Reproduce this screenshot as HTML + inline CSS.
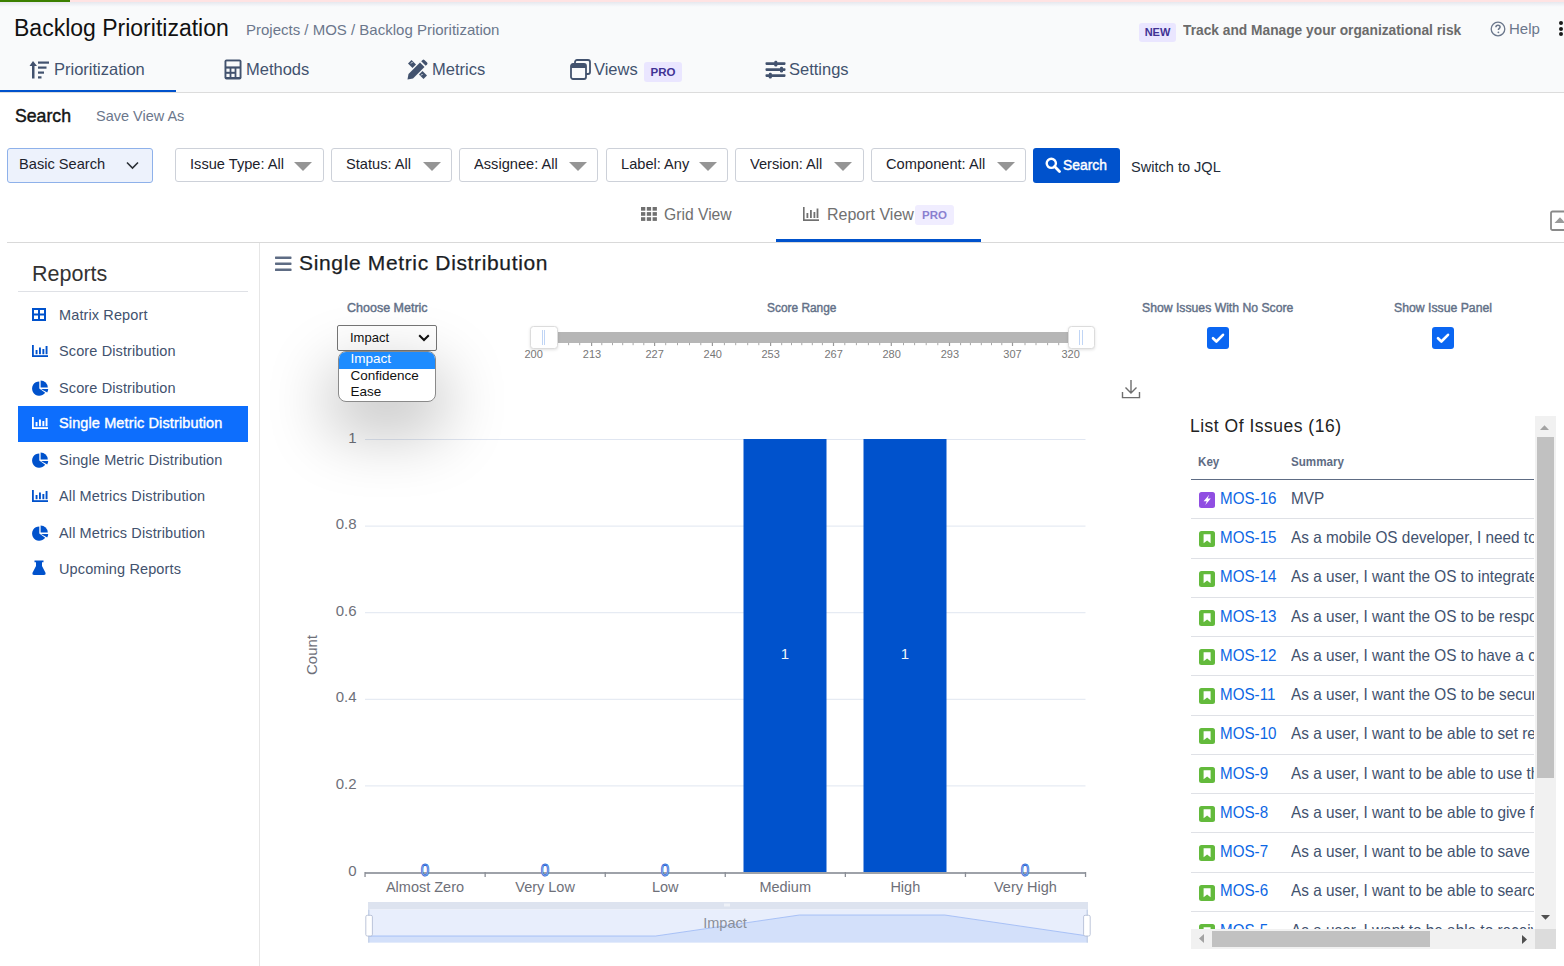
<!DOCTYPE html>
<html><head><meta charset="utf-8">
<style>
*{box-sizing:border-box;margin:0;padding:0}
html,body{width:1564px;height:966px;overflow:hidden;background:#fff;font-family:"Liberation Sans",sans-serif;color:#172b4d}
.abs{position:absolute}
#topbar{position:absolute;left:0;top:0;width:1564px;height:3px;background:#ffe3e3}
#topbar .g{position:absolute;left:0;top:0;width:70px;height:2px;background:#3b7f00}
#hdr{position:absolute;left:0;top:3px;width:1564px;height:90px;background:#f9fafb;border-bottom:1px solid #dcdcdc}
#hdrshadow{position:absolute;left:0;top:2px;width:1564px;height:5px;background:linear-gradient(#e6e8ee,#f9fafc)}
.title{position:absolute;left:14px;top:14.5px;font-size:23px;color:#111;white-space:nowrap}
.crumb{position:absolute;left:246px;top:21px;font-size:15px;color:#6b778c;white-space:nowrap}
.tab{position:absolute;top:59px;font-size:16.5px;color:#42526e;white-space:nowrap;display:flex;align-items:center}
.tab svg{margin-right:5px}
.pro{display:inline-block;background:#eae6ff;color:#403294;font-weight:bold;font-size:11.5px;padding:3px 6px;border-radius:3px}
.txt{position:absolute;white-space:nowrap}
.fbox{position:absolute;top:148px;height:34px;border:1px solid #cdd1d9;border-radius:3px;background:#fff;font-size:15px;color:#1c222c;white-space:nowrap}
.fbox span{position:absolute;top:5.8px;transform:scaleX(0.975);transform-origin:0 0}
.tri{position:absolute;top:13px;width:0;height:0;border-left:9px solid transparent;border-right:9px solid transparent;border-top:9px solid #959595}
</style></head>
<body>
<div id="topbar"><div class="g"></div></div>
<div id="hdr"></div>
<div id="hdrshadow"></div>
<div class="title">Backlog Prioritization</div>
<div class="crumb">Projects / MOS / Backlog Prioritization</div>


<div class="txt" style="left:1139px;top:23px;width:37px;height:19px;background:#eae6ff;border-radius:3px;color:#403294;font-weight:bold;font-size:11px;text-align:center;line-height:19px">NEW</div>
<div class="txt" style="left:1183px;top:20.5px;font-size:15px;font-weight:bold;color:#6b6b6b;transform:scaleX(0.917);transform-origin:0 0">Track and Manage your organizational risk</div>
<svg class="abs" style="left:1490px;top:21px" width="16" height="16" viewBox="0 0 16 16"><circle cx="8" cy="8" r="6.8" fill="none" stroke="#6b778c" stroke-width="1.3"/><path d="M5.9 6.3 C5.9 4.9 7 4.3 8 4.3 C9.1 4.3 10.1 5 10.1 6.1 C10.1 7.4 8.4 7.5 8.4 9" fill="none" stroke="#6b778c" stroke-width="1.5"/><circle cx="8.4" cy="11.3" r="0.9" fill="#6b778c"/></svg>
<div class="txt" style="left:1509px;top:20px;font-size:15px;color:#6b778c">Help</div>
<div class="abs" style="left:1559px;top:21px;width:4px;height:4px;border-radius:50%;background:#1a1a1a"></div>
<div class="abs" style="left:1559px;top:26.5px;width:4px;height:4px;border-radius:50%;background:#1a1a1a"></div>
<div class="abs" style="left:1559px;top:32px;width:4px;height:4px;border-radius:50%;background:#1a1a1a"></div>

<!-- tabs -->
<div class="abs" style="left:0;top:90px;width:176px;height:2px;background:#0052cc"></div>
<svg class="abs" style="left:29px;top:60px" width="21" height="19" viewBox="0 0 21 19"><path d="M4 1 L0.5 6 H3 V18.5 H5.5 V6 H8 Z" fill="#42526e"/><rect x="9" y="1.5" width="11" height="2.2" fill="#42526e"/><rect x="9" y="6.5" width="8.5" height="2.2" fill="#42526e"/><rect x="9" y="11.5" width="6" height="2.2" fill="#42526e"/><rect x="9" y="16.3" width="3.5" height="2.2" fill="#42526e"/></svg>
<div class="txt" style="left:54px;top:60px;font-size:16.5px;color:#42526e">Prioritization</div>
<svg class="abs" style="left:224px;top:59px" width="18" height="21" viewBox="0 0 18 21"><rect x="0.5" y="0.5" width="17" height="20" rx="2" fill="#42526e"/><rect x="2.4" y="2.4" width="13.2" height="5" fill="#f9fafb"/><rect x="2.4" y="9.6" width="3.2" height="3.2" fill="#f9fafb"/><rect x="7.4" y="9.6" width="3.2" height="3.2" fill="#f9fafb"/><rect x="2.4" y="14.8" width="3.2" height="3.2" fill="#f9fafb"/><rect x="7.4" y="14.8" width="3.2" height="3.2" fill="#f9fafb"/><rect x="12.4" y="9.6" width="3.2" height="8.4" fill="#f9fafb"/></svg>
<div class="txt" style="left:246px;top:60px;font-size:16.5px;color:#42526e">Methods</div>
<svg class="abs" style="left:407px;top:59px" width="21" height="21" viewBox="0 0 21 21"><path d="M0.5 20.5 L1.5 15 L13 3.5 L17.5 8 L6 19.5 Z" fill="#42526e"/><path d="M14.2 2.3 L15.6 0.9 Q16.5 0 17.4 0.9 L20.1 3.6 Q21 4.5 20.1 5.4 L18.7 6.8 Z" fill="#42526e"/><path d="M1 4.5 L4.5 1 L9 5.5 L5.5 9 Z" fill="#42526e"/><path d="M12 15.5 L15.5 12 L20 16.5 L16.5 20 Z" fill="#42526e"/><path d="M4 4.5 L5.5 3 M14 16.5 L15.5 15" stroke="#f9fafc" stroke-width="1"/></svg>
<div class="txt" style="left:432px;top:60px;font-size:16.5px;color:#42526e">Metrics</div>
<svg class="abs" style="left:570px;top:59px" width="21" height="21" viewBox="0 0 21 21"><rect x="5" y="1" width="15" height="14" rx="2" fill="none" stroke="#42526e" stroke-width="1.8"/><rect x="1" y="5" width="15" height="15" rx="2" fill="#f9fafc" stroke="#42526e" stroke-width="1.8"/><rect x="1" y="5" width="15" height="4" fill="#42526e"/></svg>
<div class="txt" style="left:594px;top:60px;font-size:16.5px;color:#42526e">Views</div>
<div class="txt" style="left:644px;top:62px;width:38px;height:20px;background:#eae6ff;border-radius:3px;color:#403294;font-weight:bold;font-size:11.5px;text-align:center;line-height:20px">PRO</div>
<svg class="abs" style="left:765px;top:60px" width="21" height="19" viewBox="0 0 21 19"><rect x="0.5" y="2.3" width="20" height="2.6" rx="0.8" fill="#42526e"/><rect x="0.5" y="8.3" width="20" height="2.6" rx="0.8" fill="#42526e"/><rect x="0.5" y="14.3" width="20" height="2.6" rx="0.8" fill="#42526e"/><rect x="9.3" y="0.8" width="3" height="5.6" rx="1.2" fill="#42526e"/><rect x="15" y="6.8" width="3" height="5.6" rx="1.2" fill="#42526e"/><rect x="3.8" y="12.8" width="3" height="5.6" rx="1.2" fill="#42526e"/></svg>
<div class="txt" style="left:789px;top:60px;font-size:16.5px;color:#42526e">Settings</div>

<!-- search row -->
<div class="txt" style="left:14.5px;top:104.5px;font-size:18.5px;color:#151515;-webkit-text-stroke:0.45px #151515;transform:scaleX(0.955);transform-origin:0 0">Search</div>
<div class="txt" style="left:96px;top:106.5px;font-size:15px;color:#6b778c;transform:scaleX(0.966);transform-origin:0 0">Save View As</div>

<div class="fbox" style="left:7px;width:146px;height:35px;background:#edf2fc;border-color:#8eb1ea"><span style="left:11px">Basic Search</span>
<svg class="abs" style="left:118px;top:12px" width="13" height="9" viewBox="0 0 13 9"><path d="M1 1.5 L6.5 7 L12 1.5" fill="none" stroke="#2a2f36" stroke-width="1.6"/></svg></div>
<div class="fbox" style="left:175px;width:149px"><span style="left:14px">Issue Type: All</span><div class="tri" style="left:118px"></div></div>
<div class="fbox" style="left:331px;width:121px"><span style="left:14px">Status: All</span><div class="tri" style="left:91px"></div></div>
<div class="fbox" style="left:459px;width:139px"><span style="left:14px">Assignee: All</span><div class="tri" style="left:109px"></div></div>
<div class="fbox" style="left:606px;width:122px"><span style="left:14px">Label: Any</span><div class="tri" style="left:92px"></div></div>
<div class="fbox" style="left:735px;width:129px"><span style="left:14px">Version: All</span><div class="tri" style="left:98px"></div></div>
<div class="fbox" style="left:871px;width:155px"><span style="left:14px">Component: All</span><div class="tri" style="left:125px"></div></div>
<div class="abs" style="left:1033px;top:148px;width:87px;height:35px;background:#0052cc;border-radius:3px"></div>
<svg class="abs" style="left:1045px;top:157px" width="16" height="16" viewBox="0 0 16 16"><circle cx="6.3" cy="6.3" r="4.6" fill="none" stroke="#fff" stroke-width="2.4"/><path d="M9.6 9.6 L14.5 14.5" stroke="#fff" stroke-width="2.8" stroke-linecap="round"/></svg>
<div class="txt" style="left:1063px;top:156px;font-size:15.5px;color:#fff;-webkit-text-stroke:0.45px #fff;transform:scaleX(0.895);transform-origin:0 0">Search</div>
<div class="txt" style="left:1131px;top:157.5px;font-size:15px;color:#222b38;transform:scaleX(0.97);transform-origin:0 0">Switch to JQL</div>

<!-- view tabs -->
<svg class="abs" style="left:641px;top:207px" width="16" height="14" viewBox="0 0 16 14"><g fill="#707070"><rect x="0" y="0" width="4.3" height="3.7"/><rect x="5.8" y="0" width="4.3" height="3.7"/><rect x="11.6" y="0" width="4.3" height="3.7"/><rect x="0" y="5.1" width="4.3" height="3.7"/><rect x="5.8" y="5.1" width="4.3" height="3.7"/><rect x="11.6" y="5.1" width="4.3" height="3.7"/><rect x="0" y="10.2" width="4.3" height="3.7"/><rect x="5.8" y="10.2" width="4.3" height="3.7"/><rect x="11.6" y="10.2" width="4.3" height="3.7"/></g></svg>
<div class="txt" style="left:664px;top:205px;font-size:16.5px;color:#707070;transform:scaleX(0.95);transform-origin:0 0">Grid View</div>
<svg class="abs" style="left:803px;top:207px" width="16" height="14" viewBox="0 0 16 14"><g fill="#707070"><rect x="0" y="0" width="1.6" height="14"/><rect x="0" y="12.3" width="16" height="1.7"/><rect x="3.5" y="6" width="1.8" height="5"/><rect x="7" y="3" width="1.8" height="8"/><rect x="10.5" y="5" width="1.8" height="6"/><rect x="13.6" y="1.5" width="1.8" height="9.5"/></g></svg>
<div class="txt" style="left:827px;top:205px;font-size:16.5px;color:#707070;transform:scaleX(0.97);transform-origin:0 0">Report View</div>
<div class="txt" style="left:915px;top:205px;width:39px;height:20px;background:#f0edff;border-radius:3px;color:#8a7fd0;font-weight:bold;font-size:11.5px;text-align:center;line-height:20px">PRO</div>
<div class="abs" style="left:7px;top:242px;width:1557px;height:1px;background:#d9d9d9"></div>
<div class="abs" style="left:776px;top:239px;width:205px;height:3px;background:#0052cc"></div>

<!-- sidebar -->
<div class="abs" style="left:259px;top:243px;width:1px;height:723px;background:#e6e6e6"></div>
<div class="txt" style="left:32px;top:262px;font-size:21.5px;color:#333">Reports</div>
<div class="abs" style="left:18px;top:291px;width:230px;height:1px;background:#dfe1e6"></div>
<div class="abs" style="left:18px;top:406px;width:230px;height:36px;background:#0d6efd"></div>
<svg class="abs" style="left:32px;top:308px" width="14" height="13" viewBox="0 0 14 13"><rect x="1" y="1" width="12" height="11" fill="none" stroke="#0052cc" stroke-width="2"/><rect x="6" y="1" width="2" height="11" fill="#0052cc"/><rect x="1" y="5.5" width="12" height="2" fill="#0052cc"/></svg>
<div class="txt" style="left:59px;top:307px;font-size:14.5px;color:#42526e;letter-spacing:0.12px;">Matrix Report</div>
<svg class="abs" style="left:32px;top:345px" width="16" height="12" viewBox="0 0 16 12"><g fill="#0052cc"><rect x="0" y="0" width="1.8" height="12"/><rect x="0" y="10.2" width="16" height="1.8"/><rect x="3.6" y="5" width="1.9" height="4.2"/><rect x="7" y="2.5" width="1.9" height="6.7"/><rect x="10.4" y="4" width="1.9" height="5.2"/><rect x="13.6" y="1" width="1.9" height="8.2"/></g></svg>
<div class="txt" style="left:59px;top:343px;font-size:14.5px;color:#42526e;letter-spacing:0.12px;">Score Distribution</div>
<svg class="abs" style="left:32px;top:379.5px" width="17" height="16" viewBox="0 0 17 16"><path d="M7.3 8.6 L7.3 1.4 A7.2 7.2 0 1 0 13.2 12.7 Z" fill="#0052cc"/><path d="M8.6 7.6 L8.6 0.4 A7.2 7.2 0 0 1 15.8 7.6 Z" fill="#0052cc"/><path d="M9 9 L16.2 9 A7.2 7.2 0 0 1 15.2 12.6 Z" fill="#0052cc"/></svg>
<div class="txt" style="left:59px;top:380px;font-size:14.5px;color:#42526e;letter-spacing:0.12px;">Score Distribution</div>
<svg class="abs" style="left:32px;top:417px" width="16" height="12" viewBox="0 0 16 12"><g fill="#fff"><rect x="0" y="0" width="1.8" height="12"/><rect x="0" y="10.2" width="16" height="1.8"/><rect x="3.6" y="5" width="1.9" height="4.2"/><rect x="7" y="2.5" width="1.9" height="6.7"/><rect x="10.4" y="4" width="1.9" height="5.2"/><rect x="13.6" y="1" width="1.9" height="8.2"/></g></svg>
<div class="txt" style="left:59px;top:415px;font-size:14.5px;color:#fff;letter-spacing:0.12px;-webkit-text-stroke:0.4px #fff">Single Metric Distribution</div>
<svg class="abs" style="left:32px;top:451.5px" width="17" height="16" viewBox="0 0 17 16"><path d="M7.3 8.6 L7.3 1.4 A7.2 7.2 0 1 0 13.2 12.7 Z" fill="#0052cc"/><path d="M8.6 7.6 L8.6 0.4 A7.2 7.2 0 0 1 15.8 7.6 Z" fill="#0052cc"/><path d="M9 9 L16.2 9 A7.2 7.2 0 0 1 15.2 12.6 Z" fill="#0052cc"/></svg>
<div class="txt" style="left:59px;top:452px;font-size:14.5px;color:#42526e;letter-spacing:0.12px;">Single Metric Distribution</div>
<svg class="abs" style="left:32px;top:490px" width="16" height="12" viewBox="0 0 16 12"><g fill="#0052cc"><rect x="0" y="0" width="1.8" height="12"/><rect x="0" y="10.2" width="16" height="1.8"/><rect x="3.6" y="5" width="1.9" height="4.2"/><rect x="7" y="2.5" width="1.9" height="6.7"/><rect x="10.4" y="4" width="1.9" height="5.2"/><rect x="13.6" y="1" width="1.9" height="8.2"/></g></svg>
<div class="txt" style="left:59px;top:488px;font-size:14.5px;color:#42526e;letter-spacing:0.12px;">All Metrics Distribution</div>
<svg class="abs" style="left:32px;top:524.5px" width="17" height="16" viewBox="0 0 17 16"><path d="M7.3 8.6 L7.3 1.4 A7.2 7.2 0 1 0 13.2 12.7 Z" fill="#0052cc"/><path d="M8.6 7.6 L8.6 0.4 A7.2 7.2 0 0 1 15.8 7.6 Z" fill="#0052cc"/><path d="M9 9 L16.2 9 A7.2 7.2 0 0 1 15.2 12.6 Z" fill="#0052cc"/></svg>
<div class="txt" style="left:59px;top:525px;font-size:14.5px;color:#42526e;letter-spacing:0.12px;">All Metrics Distribution</div>
<svg class="abs" style="left:32px;top:560px" width="14" height="15" viewBox="0 0 14 15"><path d="M2.5 0.5 H11.5 V2.3 H10 V6 L13.6 13 Q14 15 12 15 H2 Q0 15 0.4 13 L4 6 V2.3 H2.5 Z" fill="#0052cc"/></svg>
<div class="txt" style="left:59px;top:561px;font-size:14.5px;color:#42526e;letter-spacing:0.12px;">Upcoming Reports</div>

<!-- main header -->
<svg class="abs" style="left:275px;top:256px" width="17" height="16" viewBox="0 0 17 16"><g fill="#5e6c84"><rect x="0" y="0.5" width="16.5" height="2.4" rx="0.6"/><rect x="0" y="6.5" width="16.5" height="2.4" rx="0.6"/><rect x="0" y="12.6" width="16.5" height="2.4" rx="0.6"/></g></svg>
<div class="txt" style="left:299px;top:251px;font-size:21px;color:#1a1d24;letter-spacing:0.65px;-webkit-text-stroke:0.25px #1a1d24">Single Metric Distribution</div>

<!-- controls -->
<div class="txt" style="left:347px;top:301px;font-size:12.5px;color:#627087;-webkit-text-stroke:0.42px #627087;transform:scaleX(1);transform-origin:0 0">Choose Metric</div>
<div class="abs" style="left:337px;top:325px;width:100px;height:26px;border:1px solid #767676;border-radius:2px;background:#fff"></div>
<div class="txt" style="left:350px;top:330px;font-size:13px;color:#111">Impact</div>
<svg class="abs" style="left:418px;top:334px" width="12" height="8" viewBox="0 0 12 8"><path d="M1.2 1.2 L6 6 L10.8 1.2" fill="none" stroke="#111" stroke-width="2"/></svg>

<div class="txt" style="left:767px;top:301px;font-size:12.5px;color:#627087;-webkit-text-stroke:0.42px #627087;transform:scaleX(0.952);transform-origin:0 0">Score Range</div>
<div class="abs" style="left:550px;top:332px;width:520px;height:10.5px;background:#b6b6b6"></div>
<svg class="abs" style="left:540px;top:341px" width="545" height="6" viewBox="0 0 545 6"><rect x="28.1" y="1.8" width="1" height="2.4" fill="#a8a8a8"/><rect x="39.2" y="1.8" width="1" height="2.4" fill="#a8a8a8"/><rect x="51.0" y="1.5" width="1.2" height="3.5" fill="#999"/><rect x="61.3" y="1.8" width="1" height="2.4" fill="#a8a8a8"/><rect x="72.0" y="1.8" width="1" height="2.4" fill="#a8a8a8"/><rect x="82.2" y="1.8" width="1" height="2.4" fill="#a8a8a8"/><rect x="92.6" y="1.8" width="1" height="2.4" fill="#a8a8a8"/><rect x="103.3" y="1.8" width="1" height="2.4" fill="#a8a8a8"/><rect x="114.0" y="1.5" width="1.2" height="3.5" fill="#999"/><rect x="125.2" y="1.8" width="1" height="2.4" fill="#a8a8a8"/><rect x="137.0" y="1.8" width="1" height="2.4" fill="#a8a8a8"/><rect x="149.0" y="1.8" width="1" height="2.4" fill="#a8a8a8"/><rect x="160.3" y="1.8" width="1" height="2.4" fill="#a8a8a8"/><rect x="171.8" y="1.5" width="1.2" height="3.5" fill="#999"/><rect x="183.9" y="1.8" width="1" height="2.4" fill="#a8a8a8"/><rect x="195.2" y="1.8" width="1" height="2.4" fill="#a8a8a8"/><rect x="207.2" y="1.8" width="1" height="2.4" fill="#a8a8a8"/><rect x="218.3" y="1.8" width="1" height="2.4" fill="#a8a8a8"/><rect x="230.0" y="1.5" width="1.2" height="3.5" fill="#999"/><rect x="241.2" y="1.8" width="1" height="2.4" fill="#a8a8a8"/><rect x="251.0" y="1.8" width="1" height="2.4" fill="#a8a8a8"/><rect x="261.3" y="1.8" width="1" height="2.4" fill="#a8a8a8"/><rect x="271.8" y="1.8" width="1" height="2.4" fill="#a8a8a8"/><rect x="281.9" y="1.8" width="1" height="2.4" fill="#a8a8a8"/><rect x="292.9" y="1.5" width="1.2" height="3.5" fill="#999"/><rect x="304.3" y="1.8" width="1" height="2.4" fill="#a8a8a8"/><rect x="315.9" y="1.8" width="1" height="2.4" fill="#a8a8a8"/><rect x="327.9" y="1.8" width="1" height="2.4" fill="#a8a8a8"/><rect x="339.2" y="1.8" width="1" height="2.4" fill="#a8a8a8"/><rect x="350.7" y="1.5" width="1.2" height="3.5" fill="#999"/><rect x="363.0" y="1.8" width="1" height="2.4" fill="#a8a8a8"/><rect x="374.1" y="1.8" width="1" height="2.4" fill="#a8a8a8"/><rect x="385.7" y="1.8" width="1" height="2.4" fill="#a8a8a8"/><rect x="397.3" y="1.8" width="1" height="2.4" fill="#a8a8a8"/><rect x="408.9" y="1.5" width="1.2" height="3.5" fill="#999"/><rect x="420.1" y="1.8" width="1" height="2.4" fill="#a8a8a8"/><rect x="429.9" y="1.8" width="1" height="2.4" fill="#a8a8a8"/><rect x="440.8" y="1.8" width="1" height="2.4" fill="#a8a8a8"/><rect x="451.0" y="1.8" width="1" height="2.4" fill="#a8a8a8"/><rect x="461.3" y="1.8" width="1" height="2.4" fill="#a8a8a8"/><rect x="471.9" y="1.5" width="1.2" height="3.5" fill="#999"/><rect x="484.5" y="1.8" width="1" height="2.4" fill="#a8a8a8"/><rect x="495.5" y="1.8" width="1" height="2.4" fill="#a8a8a8"/><rect x="507.1" y="1.8" width="1" height="2.4" fill="#a8a8a8"/><rect x="518.2" y="1.8" width="1" height="2.4" fill="#a8a8a8"/></svg>
<div class="abs" style="left:530px;top:326px;width:27.5px;height:22.5px;border:1px solid #dcdcdc;border-radius:3.5px;background:#fff;box-shadow:0 1px 3px rgba(0,0,0,0.12)"></div>
<div class="abs" style="left:541.5px;top:330px;width:1px;height:14.5px;background:#c0d5f5"></div>
<div class="abs" style="left:544.3px;top:330px;width:1px;height:14.5px;background:#c0d5f5"></div>
<div class="abs" style="left:1067.5px;top:326px;width:27.5px;height:22.5px;border:1px solid #dcdcdc;border-radius:3.5px;background:#fff;box-shadow:0 1px 3px rgba(0,0,0,0.12)"></div>
<div class="abs" style="left:1079px;top:330px;width:1px;height:14.5px;background:#c0d5f5"></div>
<div class="abs" style="left:1081.8px;top:330px;width:1px;height:14.5px;background:#c0d5f5"></div>
<div class="txt" style="left:513.7px;width:40px;text-align:center;top:348px;font-size:11px;color:#777">200</div>
<div class="txt" style="left:572px;width:40px;text-align:center;top:348px;font-size:11px;color:#777">213</div>
<div class="txt" style="left:634.6px;width:40px;text-align:center;top:348px;font-size:11px;color:#777">227</div>
<div class="txt" style="left:692.8px;width:40px;text-align:center;top:348px;font-size:11px;color:#777">240</div>
<div class="txt" style="left:750.7px;width:40px;text-align:center;top:348px;font-size:11px;color:#777">253</div>
<div class="txt" style="left:813.7px;width:40px;text-align:center;top:348px;font-size:11px;color:#777">267</div>
<div class="txt" style="left:871.6px;width:40px;text-align:center;top:348px;font-size:11px;color:#777">280</div>
<div class="txt" style="left:929.9px;width:40px;text-align:center;top:348px;font-size:11px;color:#777">293</div>
<div class="txt" style="left:992.5px;width:40px;text-align:center;top:348px;font-size:11px;color:#777">307</div>
<div class="txt" style="left:1050.7px;width:40px;text-align:center;top:348px;font-size:11px;color:#777">320</div>

<div class="txt" style="left:1142px;top:301px;font-size:12.5px;color:#627087;-webkit-text-stroke:0.42px #627087;transform:scaleX(0.977);transform-origin:0 0">Show Issues With No Score</div>
<div class="txt" style="left:1394px;top:301px;font-size:12.5px;color:#627087;-webkit-text-stroke:0.42px #627087;transform:scaleX(0.979);transform-origin:0 0">Show Issue Panel</div>
<svg class="abs" style="left:1207px;top:327px" width="22" height="22" viewBox="0 0 22 22"><rect x="0" y="0" width="22" height="22" rx="3" fill="#0a66f2"/><path d="M6 11.2 L9.4 14.5 L16 7.8" fill="none" stroke="#fff" stroke-width="2.6" stroke-linecap="round" stroke-linejoin="round"/></svg>
<svg class="abs" style="left:1432px;top:327px" width="22" height="22" viewBox="0 0 22 22"><rect x="0" y="0" width="22" height="22" rx="3" fill="#0a66f2"/><path d="M6 11.2 L9.4 14.5 L16 7.8" fill="none" stroke="#fff" stroke-width="2.6" stroke-linecap="round" stroke-linejoin="round"/></svg>
<svg class="abs" style="left:1121px;top:379px" width="20" height="20" viewBox="0 0 20 20"><path d="M10 1 V14 M4.5 8.5 L10 14 L15.5 8.5 M1.5 13 V18.6 H18.5 V13" fill="none" stroke="#6e6e6e" stroke-width="1.4"/></svg>

<!-- chart -->
<svg class="abs" style="left:0;top:0" width="1564" height="966" viewBox="0 0 1564 966"><rect x="365" y="439.0" width="720.5" height="1" fill="#e0e6f1"/><rect x="365" y="525.6" width="720.5" height="1" fill="#e0e6f1"/><rect x="365" y="612.2" width="720.5" height="1" fill="#e0e6f1"/><rect x="365" y="698.8" width="720.5" height="1" fill="#e0e6f1"/><rect x="365" y="785.4" width="720.5" height="1" fill="#e0e6f1"/><rect x="743.5" y="439" width="83" height="433.5" fill="#0052cc"/><rect x="863.5" y="439" width="83" height="433.5" fill="#0052cc"/><rect x="365" y="872" width="720.5" height="2" fill="#9ea2a9"/><rect x="364.4" y="872" width="1.3" height="5" fill="#8a8e96"/><rect x="484.5" y="872" width="1.3" height="5" fill="#8a8e96"/><rect x="604.6" y="872" width="1.3" height="5" fill="#8a8e96"/><rect x="724.6" y="872" width="1.3" height="5" fill="#8a8e96"/><rect x="844.7" y="872" width="1.3" height="5" fill="#8a8e96"/><rect x="964.8" y="872" width="1.3" height="5" fill="#8a8e96"/><rect x="1084.9" y="872" width="1.3" height="5" fill="#8a8e96"/><rect x="368" y="902" width="720" height="7.5" fill="#dde3ef"/><rect x="368" y="909.5" width="720" height="33" fill="#e8eefc"/><path d="M368 936 L655.7 936 L799.5 915 L944.7 915 L1088 936 L1088 942.5 L368 942.5 Z" fill="#d3e0fa"/><path d="M368 936 L655.7 936 L799.5 915 L944.7 915 L1088 936" fill="none" stroke="#9ab8f5" stroke-width="0.8"/><rect x="368" y="909.5" width="1.5" height="33" fill="#c6d2e8"/><rect x="1086.5" y="909.5" width="1.5" height="33" fill="#c6d2e8"/><rect x="365.8" y="915.3" width="6.6" height="20.7" rx="1.5" fill="#fff" stroke="#acb8d1" stroke-width="0.8"/><rect x="1083.6" y="915.3" width="6.6" height="20.7" rx="1.5" fill="#fff" stroke="#acb8d1" stroke-width="0.8"/><rect x="724.5" y="903.5" width="1" height="3" fill="#fff"/><rect x="726.5" y="903.5" width="1" height="3" fill="#fff"/><rect x="728.5" y="903.5" width="1" height="3" fill="#fff"/></svg>
<div class="txt" style="left:300px;width:56.5px;text-align:right;top:428.5px;font-size:15px;color:#6e7079">1</div>
<div class="txt" style="left:300px;width:56.5px;text-align:right;top:515.1px;font-size:15px;color:#6e7079">0.8</div>
<div class="txt" style="left:300px;width:56.5px;text-align:right;top:601.7px;font-size:15px;color:#6e7079">0.6</div>
<div class="txt" style="left:300px;width:56.5px;text-align:right;top:688.3px;font-size:15px;color:#6e7079">0.4</div>
<div class="txt" style="left:300px;width:56.5px;text-align:right;top:774.9px;font-size:15px;color:#6e7079">0.2</div>
<div class="txt" style="left:300px;width:56.5px;text-align:right;top:861.5px;font-size:15px;color:#6e7079">0</div>
<div class="txt" style="left:292px;top:646px;width:40px;text-align:center;font-size:15px;color:#6e7079;transform:rotate(-90deg);transform-origin:20px 9px">Count</div>
<div class="txt" style="left:365.0px;width:120px;text-align:center;top:879px;font-size:14.5px;color:#6e7079">Almost Zero</div>
<div class="txt" style="left:485.1px;width:120px;text-align:center;top:879px;font-size:14.5px;color:#6e7079">Very Low</div>
<div class="txt" style="left:605.2px;width:120px;text-align:center;top:879px;font-size:14.5px;color:#6e7079">Low</div>
<div class="txt" style="left:725.2px;width:120px;text-align:center;top:879px;font-size:14.5px;color:#6e7079">Medium</div>
<div class="txt" style="left:845.3px;width:120px;text-align:center;top:879px;font-size:14.5px;color:#6e7079">High</div>
<div class="txt" style="left:965.4px;width:120px;text-align:center;top:879px;font-size:14.5px;color:#6e7079">Very High</div>
<div class="txt" style="left:765px;width:40px;text-align:center;top:645px;font-size:15px;color:#eef2fa">1</div>
<div class="txt" style="left:885px;width:40px;text-align:center;top:645px;font-size:15px;color:#eef2fa">1</div>
<div class="txt" style="left:405.0px;width:40px;text-align:center;top:860.5px;font-size:17px;color:#fff;-webkit-text-stroke:0.9px #2563d8;transform:scaleX(0.9)">0</div>
<div class="txt" style="left:525.1px;width:40px;text-align:center;top:860.5px;font-size:17px;color:#fff;-webkit-text-stroke:0.9px #2563d8;transform:scaleX(0.9)">0</div>
<div class="txt" style="left:645.2px;width:40px;text-align:center;top:860.5px;font-size:17px;color:#fff;-webkit-text-stroke:0.9px #2563d8;transform:scaleX(0.9)">0</div>
<div class="txt" style="left:1005.4px;width:40px;text-align:center;top:860.5px;font-size:17px;color:#fff;-webkit-text-stroke:0.9px #2563d8;transform:scaleX(0.9)">0</div>
<div class="txt" style="left:685px;width:80px;text-align:center;top:915px;font-size:14.5px;color:#8a8f99">Impact</div>

<!-- issue panel -->
<div class="txt" style="left:1190px;top:415.5px;font-size:17.5px;color:#222;letter-spacing:0.5px">List Of Issues (16)</div>
<div class="abs" style="left:1191px;top:416px;width:365px;height:513px;overflow:hidden">
<div class="txt" style="left:7px;top:39px;font-size:12.5px;font-weight:bold;color:#5e6c84;transform:scaleX(0.93);transform-origin:0 0">Key</div>
<div class="txt" style="left:100px;top:39px;font-size:12.5px;font-weight:bold;color:#5e6c84;transform:scaleX(0.93);transform-origin:0 0">Summary</div>
<div class="abs" style="left:0;top:62.6px;width:343px;height:1.6px;background:#5e6c84"></div>
<div class="abs" style="left:0;top:102.30px;width:343px;height:1.2px;background:#dfe1e6"></div>
<svg class="abs" style="left:8px;top:76.00px" width="16" height="16" viewBox="0 0 16 16"><rect width="16" height="16" rx="2.5" fill="#904ee2"/><path d="M10.2 2.8 L4.6 9.3 H7.7 L6.3 13 L11.8 6.6 H8.7 Z" fill="#fff"/></svg>
<div class="txt" style="left:29px;top:72.80px;font-size:16.5px;color:#0c66e4;transform:scaleX(0.92);transform-origin:0 0">MOS-16</div>
<div class="abs" style="left:100px;top:72.80px;width:243px;height:22px;overflow:hidden"><div class="txt" style="left:0;top:0;font-size:16.5px;color:#42526e;transform:scaleX(0.93);transform-origin:0 0">MVP</div></div>
<div class="abs" style="left:0;top:141.55px;width:343px;height:1.2px;background:#dfe1e6"></div>
<svg class="abs" style="left:8px;top:115.25px" width="16" height="16" viewBox="0 0 16 16"><rect width="16" height="16" rx="2.5" fill="#63ba3c"/><path d="M4.6 3.3 H11.6 V12.3 L8.1 9.6 L4.6 12.3 Z" fill="#fff"/></svg>
<div class="txt" style="left:29px;top:112.05px;font-size:16.5px;color:#0c66e4;transform:scaleX(0.92);transform-origin:0 0">MOS-15</div>
<div class="abs" style="left:100px;top:112.05px;width:243px;height:22px;overflow:hidden"><div class="txt" style="left:0;top:0;font-size:16.5px;color:#42526e;transform:scaleX(0.93);transform-origin:0 0">As a mobile OS developer, I need to ensure</div></div>
<div class="abs" style="left:0;top:180.80px;width:343px;height:1.2px;background:#dfe1e6"></div>
<svg class="abs" style="left:8px;top:154.50px" width="16" height="16" viewBox="0 0 16 16"><rect width="16" height="16" rx="2.5" fill="#63ba3c"/><path d="M4.6 3.3 H11.6 V12.3 L8.1 9.6 L4.6 12.3 Z" fill="#fff"/></svg>
<div class="txt" style="left:29px;top:151.30px;font-size:16.5px;color:#0c66e4;transform:scaleX(0.92);transform-origin:0 0">MOS-14</div>
<div class="abs" style="left:100px;top:151.30px;width:243px;height:22px;overflow:hidden"><div class="txt" style="left:0;top:0;font-size:16.5px;color:#42526e;transform:scaleX(0.93);transform-origin:0 0">As a user, I want the OS to integrate with</div></div>
<div class="abs" style="left:0;top:220.05px;width:343px;height:1.2px;background:#dfe1e6"></div>
<svg class="abs" style="left:8px;top:193.75px" width="16" height="16" viewBox="0 0 16 16"><rect width="16" height="16" rx="2.5" fill="#63ba3c"/><path d="M4.6 3.3 H11.6 V12.3 L8.1 9.6 L4.6 12.3 Z" fill="#fff"/></svg>
<div class="txt" style="left:29px;top:190.55px;font-size:16.5px;color:#0c66e4;transform:scaleX(0.92);transform-origin:0 0">MOS-13</div>
<div class="abs" style="left:100px;top:190.55px;width:243px;height:22px;overflow:hidden"><div class="txt" style="left:0;top:0;font-size:16.5px;color:#42526e;transform:scaleX(0.93);transform-origin:0 0">As a user, I want the OS to be responsive</div></div>
<div class="abs" style="left:0;top:259.30px;width:343px;height:1.2px;background:#dfe1e6"></div>
<svg class="abs" style="left:8px;top:233.00px" width="16" height="16" viewBox="0 0 16 16"><rect width="16" height="16" rx="2.5" fill="#63ba3c"/><path d="M4.6 3.3 H11.6 V12.3 L8.1 9.6 L4.6 12.3 Z" fill="#fff"/></svg>
<div class="txt" style="left:29px;top:229.80px;font-size:16.5px;color:#0c66e4;transform:scaleX(0.92);transform-origin:0 0">MOS-12</div>
<div class="abs" style="left:100px;top:229.80px;width:243px;height:22px;overflow:hidden"><div class="txt" style="left:0;top:0;font-size:16.5px;color:#42526e;transform:scaleX(0.93);transform-origin:0 0">As a user, I want the OS to have a clean</div></div>
<div class="abs" style="left:0;top:298.55px;width:343px;height:1.2px;background:#dfe1e6"></div>
<svg class="abs" style="left:8px;top:272.25px" width="16" height="16" viewBox="0 0 16 16"><rect width="16" height="16" rx="2.5" fill="#63ba3c"/><path d="M4.6 3.3 H11.6 V12.3 L8.1 9.6 L4.6 12.3 Z" fill="#fff"/></svg>
<div class="txt" style="left:29px;top:269.05px;font-size:16.5px;color:#0c66e4;transform:scaleX(0.92);transform-origin:0 0">MOS-11</div>
<div class="abs" style="left:100px;top:269.05px;width:243px;height:22px;overflow:hidden"><div class="txt" style="left:0;top:0;font-size:16.5px;color:#42526e;transform:scaleX(0.93);transform-origin:0 0">As a user, I want the OS to be secure</div></div>
<div class="abs" style="left:0;top:337.80px;width:343px;height:1.2px;background:#dfe1e6"></div>
<svg class="abs" style="left:8px;top:311.50px" width="16" height="16" viewBox="0 0 16 16"><rect width="16" height="16" rx="2.5" fill="#63ba3c"/><path d="M4.6 3.3 H11.6 V12.3 L8.1 9.6 L4.6 12.3 Z" fill="#fff"/></svg>
<div class="txt" style="left:29px;top:308.30px;font-size:16.5px;color:#0c66e4;transform:scaleX(0.92);transform-origin:0 0">MOS-10</div>
<div class="abs" style="left:100px;top:308.30px;width:243px;height:22px;overflow:hidden"><div class="txt" style="left:0;top:0;font-size:16.5px;color:#42526e;transform:scaleX(0.93);transform-origin:0 0">As a user, I want to be able to set reminders</div></div>
<div class="abs" style="left:0;top:377.05px;width:343px;height:1.2px;background:#dfe1e6"></div>
<svg class="abs" style="left:8px;top:350.75px" width="16" height="16" viewBox="0 0 16 16"><rect width="16" height="16" rx="2.5" fill="#63ba3c"/><path d="M4.6 3.3 H11.6 V12.3 L8.1 9.6 L4.6 12.3 Z" fill="#fff"/></svg>
<div class="txt" style="left:29px;top:347.55px;font-size:16.5px;color:#0c66e4;transform:scaleX(0.92);transform-origin:0 0">MOS-9</div>
<div class="abs" style="left:100px;top:347.55px;width:243px;height:22px;overflow:hidden"><div class="txt" style="left:0;top:0;font-size:16.5px;color:#42526e;transform:scaleX(0.93);transform-origin:0 0">As a user, I want to be able to use the</div></div>
<div class="abs" style="left:0;top:416.30px;width:343px;height:1.2px;background:#dfe1e6"></div>
<svg class="abs" style="left:8px;top:390.00px" width="16" height="16" viewBox="0 0 16 16"><rect width="16" height="16" rx="2.5" fill="#63ba3c"/><path d="M4.6 3.3 H11.6 V12.3 L8.1 9.6 L4.6 12.3 Z" fill="#fff"/></svg>
<div class="txt" style="left:29px;top:386.80px;font-size:16.5px;color:#0c66e4;transform:scaleX(0.92);transform-origin:0 0">MOS-8</div>
<div class="abs" style="left:100px;top:386.80px;width:243px;height:22px;overflow:hidden"><div class="txt" style="left:0;top:0;font-size:16.5px;color:#42526e;transform:scaleX(0.93);transform-origin:0 0">As a user, I want to be able to give feedback</div></div>
<div class="abs" style="left:0;top:455.55px;width:343px;height:1.2px;background:#dfe1e6"></div>
<svg class="abs" style="left:8px;top:429.25px" width="16" height="16" viewBox="0 0 16 16"><rect width="16" height="16" rx="2.5" fill="#63ba3c"/><path d="M4.6 3.3 H11.6 V12.3 L8.1 9.6 L4.6 12.3 Z" fill="#fff"/></svg>
<div class="txt" style="left:29px;top:426.05px;font-size:16.5px;color:#0c66e4;transform:scaleX(0.92);transform-origin:0 0">MOS-7</div>
<div class="abs" style="left:100px;top:426.05px;width:243px;height:22px;overflow:hidden"><div class="txt" style="left:0;top:0;font-size:16.5px;color:#42526e;transform:scaleX(0.93);transform-origin:0 0">As a user, I want to be able to save my settings</div></div>
<div class="abs" style="left:0;top:494.80px;width:343px;height:1.2px;background:#dfe1e6"></div>
<svg class="abs" style="left:8px;top:468.50px" width="16" height="16" viewBox="0 0 16 16"><rect width="16" height="16" rx="2.5" fill="#63ba3c"/><path d="M4.6 3.3 H11.6 V12.3 L8.1 9.6 L4.6 12.3 Z" fill="#fff"/></svg>
<div class="txt" style="left:29px;top:465.30px;font-size:16.5px;color:#0c66e4;transform:scaleX(0.92);transform-origin:0 0">MOS-6</div>
<div class="abs" style="left:100px;top:465.30px;width:243px;height:22px;overflow:hidden"><div class="txt" style="left:0;top:0;font-size:16.5px;color:#42526e;transform:scaleX(0.93);transform-origin:0 0">As a user, I want to be able to search</div></div>
<svg class="abs" style="left:8px;top:507.75px" width="16" height="16" viewBox="0 0 16 16"><rect width="16" height="16" rx="2.5" fill="#63ba3c"/><path d="M4.6 3.3 H11.6 V12.3 L8.1 9.6 L4.6 12.3 Z" fill="#fff"/></svg>
<div class="txt" style="left:29px;top:504.55px;font-size:16.5px;color:#0c66e4;transform:scaleX(0.92);transform-origin:0 0">MOS-5</div>
<div class="abs" style="left:100px;top:504.55px;width:243px;height:22px;overflow:hidden"><div class="txt" style="left:0;top:0;font-size:16.5px;color:#42526e;transform:scaleX(0.93);transform-origin:0 0">As a user, I want to be able to receive</div></div>

<!-- v scrollbar -->
<div class="abs" style="left:343.5px;top:0;width:21px;height:513px;background:#f1f1f1"></div>
<div class="abs" style="left:345.5px;top:21px;width:17px;height:341px;background:#c1c1c1"></div>
<svg class="abs" style="left:348px;top:8px" width="11" height="7" viewBox="0 0 11 7"><path d="M1 6 L5.5 1.2 L10 6 Z" fill="#a3a3a3"/></svg>
<svg class="abs" style="left:349px;top:498px" width="11" height="7" viewBox="0 0 11 7"><path d="M1 1 L5.5 5.8 L10 1 Z" fill="#505050"/></svg>
</div>
<!-- h scrollbar -->
<div class="abs" style="left:1191px;top:928.5px;width:344px;height:20.5px;background:#f1f1f1"></div>
<div class="abs" style="left:1212px;top:930.5px;width:218px;height:16.5px;background:#c1c1c1"></div>
<div class="abs" style="left:1534.5px;top:928.5px;width:21.5px;height:20.5px;background:#dcdcdc"></div>
<svg class="abs" style="left:1198px;top:933px" width="7" height="11" viewBox="0 0 7 11"><path d="M6 1 L1 5.5 L6 10 Z" fill="#a3a3a3"/></svg>
<svg class="abs" style="left:1521px;top:934px" width="7" height="11" viewBox="0 0 7 11"><path d="M1 1 L6 5.5 L1 10 Z" fill="#505050"/></svg>

<!-- right edge icon -->
<svg class="abs" style="left:1550px;top:209.5px" width="14" height="22" viewBox="0 0 14 22"><rect x="1" y="1.5" width="20" height="18.5" rx="1.5" fill="none" stroke="#8a8a8a" stroke-width="1.8"/><path d="M4.5 13 L10 7.2 L15.5 13 Z" fill="#9a9a9a"/></svg>

<!-- dropdown -->
<div class="abs" style="left:338px;top:351px;width:97.5px;height:51px;border-radius:8px;background:#fff;box-shadow:0 24px 62px 10px rgba(0,0,0,0.22);border:1px solid #8a8a8a;overflow:hidden">
<div class="abs" style="left:0;top:0;width:100%;height:17px;background:#1e8cff"></div>
<div class="txt" style="left:11.5px;top:-1px;font-size:13.5px;color:#fff;line-height:16px">Impact</div>
<div class="txt" style="left:11.5px;top:15.5px;font-size:13.5px;color:#111;line-height:16px">Confidence</div>
<div class="txt" style="left:11.5px;top:32px;font-size:13.5px;color:#111;line-height:16px">Ease</div>
</div>
</body></html>
